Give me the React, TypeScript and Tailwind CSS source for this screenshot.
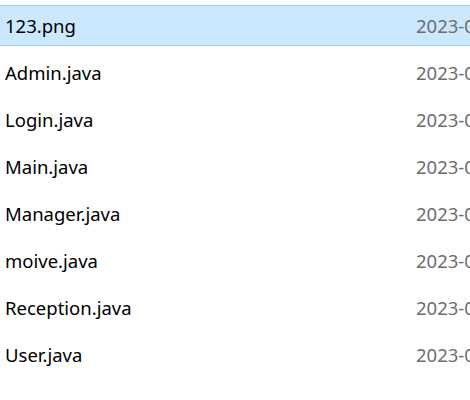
const files = [
  "123.png",
  "Admin.java",
  "Login.java",
  "Main.java",
  "Manager.java",
  "moive.java",
  "Reception.java",
  "User.java",
];

const App = () => {
  return (
    <div
      className="w-[470px] h-[400px] bg-white overflow-hidden pt-[5px] flex flex-col gap-[6px]"
      style={{ fontFamily: '"Noto Sans", "Noto Sans CJK SC", sans-serif' }}
    >
      {files.map((name, i) => (
        <div
          key={name}
          className={
            i === 0
              ? "h-[41px] shrink-0 flex items-center bg-[#cce8ff] border-y border-[#99d1ff] whitespace-nowrap"
              : "h-[41px] shrink-0 flex items-center border-y border-transparent whitespace-nowrap"
          }
        >
          <span className="w-[416px] shrink-0 pl-[5px] text-[18.5px] text-[#000000]">{name}</span>
          <span className="text-[18.5px] text-[#6d6d6d]">2023-06-01</span>
        </div>
      ))}
    </div>
  );
};

export default App;
